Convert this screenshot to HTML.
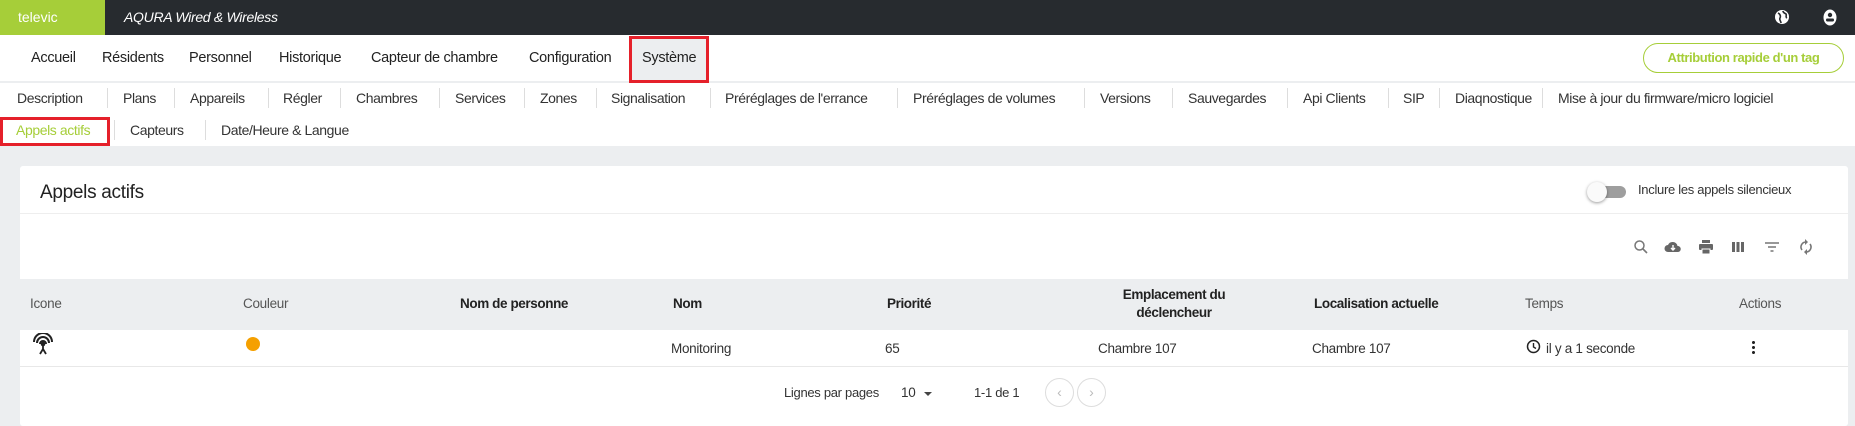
<!DOCTYPE html>
<html><head><meta charset="utf-8"><style>
*{margin:0;padding:0;box-sizing:border-box}
body{width:1855px;height:418px;overflow:hidden;background:#eceef0;font-family:"Liberation Sans",sans-serif;color:#222;position:relative;font-size:14px}
.a{position:absolute;white-space:nowrap}
.top{position:absolute;left:0;top:0;width:1855px;height:35px;background:#272b2f}
.logo{position:absolute;left:0;top:0;width:105px;height:35px;background:#a6ce39;color:#fff;font-size:14px;line-height:35px;padding-left:18px}
.white{position:absolute;left:0;top:35px;width:1855px;height:111px;background:#fff}
.nav{top:50px;font-size:14.5px;color:#222;letter-spacing:-0.3px}
.sub{font-size:14px;color:#333;letter-spacing:-0.4px}
.sep{position:absolute;width:1px;height:20px;background:#ddd}
.card{position:absolute;left:20px;top:166px;width:1828px;height:260px;background:#fff;border-radius:3px}
.th{font-size:13.5px;color:#555;letter-spacing:-0.3px}
.thb{font-size:13.5px;font-weight:bold;color:#222;letter-spacing:-0.4px}
.td{font-size:13.5px;color:#333;letter-spacing:-0.3px}
.ic{position:absolute;top:239px}
</style></head><body>
<div class="top"><div class="logo">televic</div>
<div class="a" style="left:124px;top:9px;color:#fff;font-style:italic;font-size:14px;letter-spacing:-0.3px">AQURA Wired &amp; Wireless</div>
<svg class="a" style="left:1774px;top:9px" width="16" height="16" viewBox="0 0 16 16"><circle cx="8" cy="8" r="7" fill="#fff"/><path d="M4 4c2 1 3 3 2 5s1 3 1 5M9 2c0 2 2 2 3 3s-1 3 1 4" stroke="#272b2f" stroke-width="1.6" fill="none"/></svg>
<svg class="a" style="left:1823px;top:9px" width="14" height="17" viewBox="0 0 14 17"><ellipse cx="7" cy="8.5" rx="6.5" ry="8" fill="#fff"/><circle cx="7" cy="6" r="2.2" fill="#272b2f"/><rect x="3" y="9.5" width="8" height="3" rx="1.2" fill="#272b2f"/></svg>
</div>
<div class="white"></div>
<div class="a" style="left:0;top:81px;width:1855px;height:2px;background:#eceef0"></div>
<div class="a" style="left:629px;top:36px;width:80px;height:47px;background:#eceef0;border:3px solid #e5202a"></div>
<div class="a nav" style="left:31px">Accueil</div>
<div class="a nav" style="left:102px">Résidents</div>
<div class="a nav" style="left:189px">Personnel</div>
<div class="a nav" style="left:279px">Historique</div>
<div class="a nav" style="left:371px">Capteur de chambre</div>
<div class="a nav" style="left:529px">Configuration</div>
<div class="a nav" style="left:642px">Système</div>
<div class="a" style="left:1643px;top:43px;width:201px;height:30px;border:1.5px solid #a6ce39;border-radius:15px;color:#a6ce39;font-weight:bold;font-size:13px;line-height:27px;text-align:center;letter-spacing:-0.4px">Attribution rapide d'un tag</div>

<div class="a sub" style="left:17px;top:90px">Description</div><div class="sep" style="left:107px;top:88px"></div>
<div class="a sub" style="left:123px;top:90px">Plans</div><div class="sep" style="left:174px;top:88px"></div>
<div class="a sub" style="left:190px;top:90px">Appareils</div><div class="sep" style="left:268px;top:88px"></div>
<div class="a sub" style="left:283px;top:90px">Régler</div><div class="sep" style="left:340px;top:88px"></div>
<div class="a sub" style="left:356px;top:90px">Chambres</div><div class="sep" style="left:439px;top:88px"></div>
<div class="a sub" style="left:455px;top:90px">Services</div><div class="sep" style="left:524px;top:88px"></div>
<div class="a sub" style="left:540px;top:90px">Zones</div><div class="sep" style="left:596px;top:88px"></div>
<div class="a sub" style="left:611px;top:90px">Signalisation</div><div class="sep" style="left:710px;top:88px"></div>
<div class="a sub" style="left:725px;top:90px">Préréglages de l'errance</div><div class="sep" style="left:897px;top:88px"></div>
<div class="a sub" style="left:913px;top:90px">Préréglages de volumes</div><div class="sep" style="left:1084px;top:88px"></div>
<div class="a sub" style="left:1100px;top:90px">Versions</div><div class="sep" style="left:1172px;top:88px"></div>
<div class="a sub" style="left:1188px;top:90px">Sauvegardes</div><div class="sep" style="left:1287px;top:88px"></div>
<div class="a sub" style="left:1303px;top:90px">Api Clients</div><div class="sep" style="left:1388px;top:88px"></div>
<div class="a sub" style="left:1403px;top:90px">SIP</div><div class="sep" style="left:1439px;top:88px"></div>
<div class="a sub" style="left:1455px;top:90px">Diaqnostique</div><div class="sep" style="left:1542px;top:88px"></div>
<div class="a sub" style="left:1558px;top:90px">Mise à jour du firmware/micro logiciel</div>
<div class="a" style="left:0;top:117px;width:110px;height:29px;border:3px solid #e5202a"></div>
<div class="a sub" style="left:16px;top:122px;color:#a6ce39">Appels actifs</div><div class="sep" style="left:114px;top:120px"></div>
<div class="a sub" style="left:130px;top:122px">Capteurs</div><div class="sep" style="left:205px;top:120px"></div>
<div class="a sub" style="left:221px;top:122px">Date/Heure &amp; Langue</div>

<div class="card"></div>
<div class="a" style="left:40px;top:182px;font-size:19px;color:#222;letter-spacing:-0.3px">Appels actifs</div>
<div class="a" style="left:20px;top:213px;width:1828px;height:1px;background:#eee"></div>
<div class="a" style="left:1590px;top:186px;width:36px;height:12px;border-radius:6px;background:#9e9e9e"></div>
<div class="a" style="left:1587px;top:182px;width:20px;height:20px;border-radius:10px;background:#fafafa;box-shadow:0 1px 3px rgba(0,0,0,.4)"></div>
<div class="a" style="left:1638px;top:182px;font-size:13px;color:#333;letter-spacing:-0.3px">Inclure les appels silencieux</div>

<svg class="ic" style="left:1633px" width="16" height="16" viewBox="0 0 16 16"><circle cx="6.5" cy="6.5" r="4.5" stroke="#777" stroke-width="1.5" fill="none"/><path d="M10 10l4 4" stroke="#777" stroke-width="1.6"/></svg>
<svg class="ic" style="left:1664px" width="18" height="16" viewBox="0 0 18 16"><path d="M4 13a3.5 3.5 0 010-7 5 5 0 019.5 1A3 3 0 0114 13z" fill="#666"/><path d="M9 6v5M7 9l2 2 2-2" stroke="#fff" stroke-width="1.4" fill="none"/></svg>
<svg class="ic" style="left:1698px" width="16" height="16" viewBox="0 0 16 16"><rect x="4" y="1" width="8" height="3" fill="#666"/><rect x="1" y="5" width="14" height="6" rx="1" fill="#666"/><rect x="4" y="10" width="8" height="5" fill="#666" stroke="#fff"/></svg>
<svg class="ic" style="left:1731px" width="14" height="16" viewBox="0 0 14 16"><rect x="1" y="3" width="3" height="10" fill="#666"/><rect x="5.5" y="3" width="3" height="10" fill="#666"/><rect x="10" y="3" width="3" height="10" fill="#666"/></svg>
<svg class="ic" style="left:1764px" width="16" height="16" viewBox="0 0 16 16"><path d="M1 4h14M4 8h8M6.5 12h3" stroke="#777" stroke-width="1.5"/></svg>
<svg class="ic" style="left:1799px" width="14" height="16" viewBox="0 0 14 16"><path d="M3 11A5 5 0 017 3M11 5a5 5 0 01-4 8" stroke="#777" stroke-width="1.6" fill="none"/><path d="M6 0v6l3-3zM8 16v-6l-3 3z" fill="#777"/></svg>

<div class="a" style="left:20px;top:279px;width:1828px;height:51px;background:#eceef0"></div>
<div class="a th" style="left:30px;top:296px">Icone</div>
<div class="a th" style="left:243px;top:296px">Couleur</div>
<div class="a thb" style="left:460px;top:296px">Nom de personne</div>
<div class="a thb" style="left:673px;top:296px">Nom</div>
<div class="a thb" style="left:887px;top:296px">Priorité</div>
<div class="a thb" style="left:1114px;top:286px;text-align:center;width:120px;white-space:normal;line-height:18px">Emplacement du déclencheur</div>
<div class="a thb" style="left:1314px;top:296px">Localisation actuelle</div>
<div class="a th" style="left:1525px;top:296px">Temps</div>
<div class="a th" style="left:1739px;top:296px">Actions</div>

<svg class="a" style="left:31px;top:333px" width="24" height="22" viewBox="0 0 24 22"><path d="M3 9a9 9 0 0118 0M6 10a6 6 0 0112 0M9 11a3 3 0 016 0" stroke="#222" stroke-width="2" fill="none"/><circle cx="12" cy="11" r="2.3" fill="#222"/><path d="M12 12v5M12 16l-3 5M12 16l3 5" stroke="#222" stroke-width="1.8"/></svg>
<div class="a" style="left:246px;top:337px;width:14px;height:14px;border-radius:7px;background:#f5a000"></div>
<div class="a td" style="left:671px;top:341px">Monitoring</div>
<div class="a td" style="left:885px;top:341px">65</div>
<div class="a td" style="left:1098px;top:341px">Chambre 107</div>
<div class="a td" style="left:1312px;top:341px">Chambre 107</div>
<svg class="a" style="left:1526px;top:339px" width="15" height="15" viewBox="0 0 15 15"><circle cx="7.5" cy="7.5" r="6" stroke="#222" stroke-width="1.5" fill="none"/><path d="M7.5 4v4l2.5 1.5" stroke="#222" stroke-width="1.4" fill="none"/></svg>
<div class="a td" style="left:1546px;top:341px">il y a 1 seconde</div>
<div class="a" style="left:1752px;top:340px;width:3px;height:14px;background:radial-gradient(circle,#222 1.4px,transparent 1.6px) 0 0/3px 5px"></div>
<div class="a" style="left:20px;top:366px;width:1828px;height:1px;background:#e8e8e8"></div>

<div class="a td" style="left:784px;top:385px;font-size:13px">Lignes par pages</div>
<div class="a td" style="left:901px;top:385px">10</div>
<div class="a" style="left:924px;top:392px;border:4px solid transparent;border-top-color:#444;border-bottom:0"></div>
<div class="a td" style="left:974px;top:385px;font-size:13px">1-1 de 1</div>
<div class="a" style="left:1045px;top:378px;width:29px;height:29px;border:1px solid #ddd;border-radius:50%;color:#bbb;text-align:center;line-height:27px">‹</div>
<div class="a" style="left:1077px;top:378px;width:29px;height:29px;border:1px solid #ddd;border-radius:50%;color:#bbb;text-align:center;line-height:27px">›</div>
</body></html>
